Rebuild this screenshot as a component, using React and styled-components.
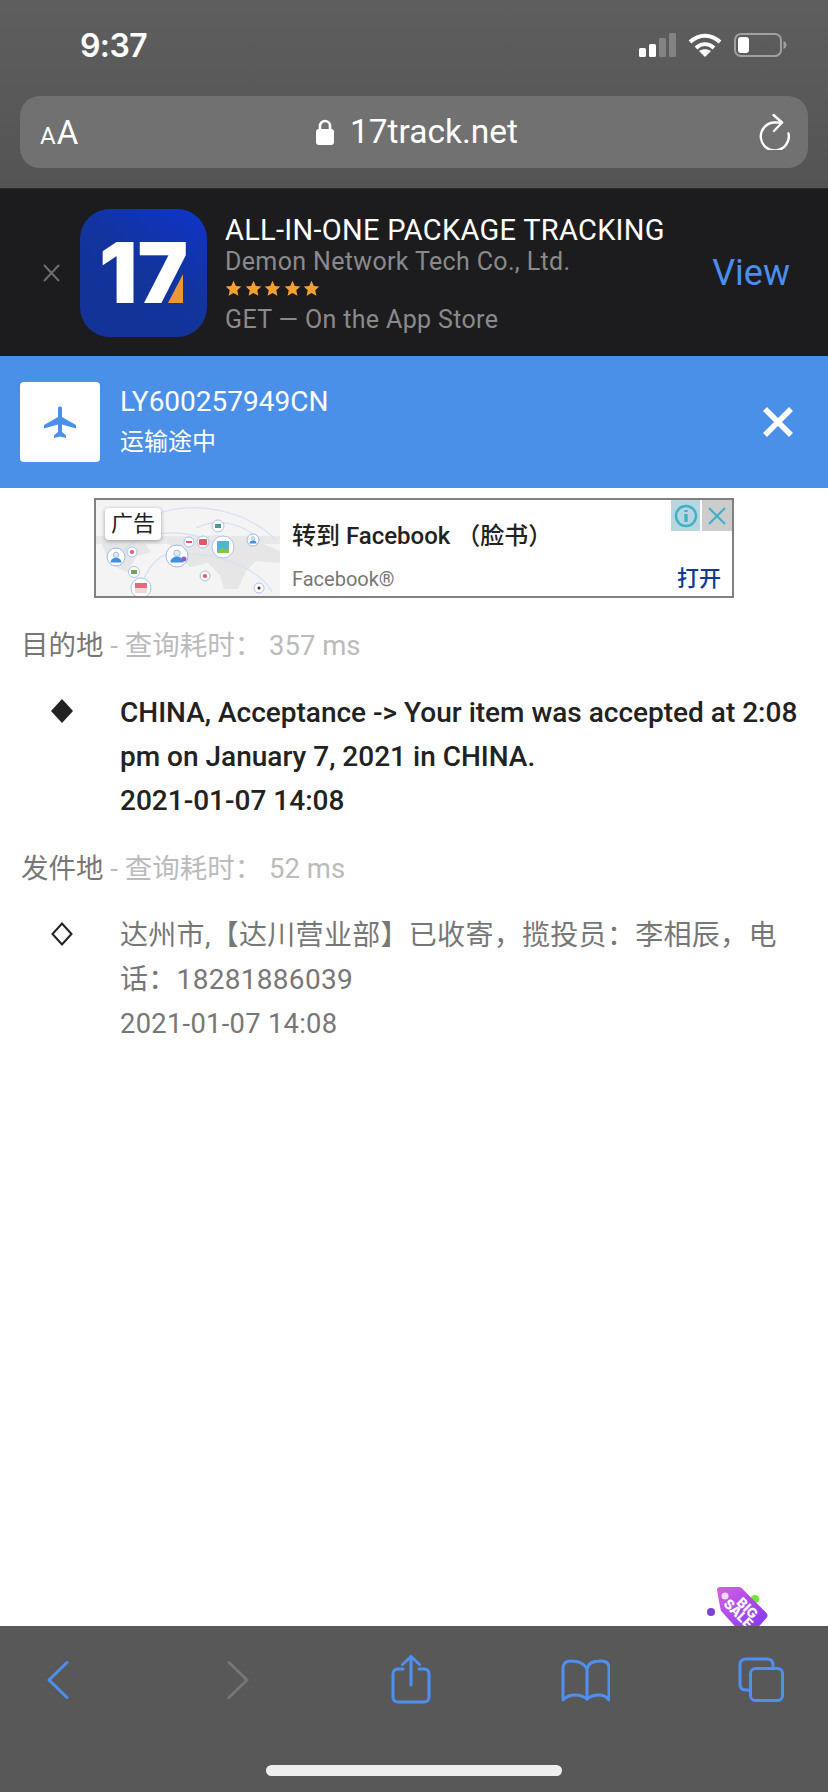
import React from "react";
import styled, { createGlobalStyle } from "styled-components";

const Global = createGlobalStyle`
  html, body { margin: 0; padding: 0; background: #fff; }
  body { font-family: Roboto, "Noto Sans CJK SC", sans-serif; }
  * { box-sizing: border-box; }
`;

const Screen = styled.div`
  width: 828px;
  height: 1792px;
  display: flex;
  flex-direction: column;
  overflow: hidden;
  background: #fff;
`;

const TopChrome = styled.header`
  height: 188px;
  padding: 0 20px;
  background: linear-gradient(#5e5e5e, #545454);
  font-family: Inter, sans-serif;
  color: #fff;
`;

const StatusBar = styled.div`
  height: 96px;
  padding: 28px 21px 0 60px;
  display: flex;
  justify-content: space-between;
  align-items: flex-start;
`;

const Clock = styled.span`
  font-size: 32px;
  line-height: 36px;
  font-weight: 600;
  letter-spacing: -0.6px;
`;

const StatusIcons = styled.div`
  display: flex;
  align-items: center;
  gap: 12px;
  padding-top: 5px;
`;

const AddressPill = styled.div`
  height: 72px;
  border-radius: 20px;
  background: #717171;
  padding: 0 18px 0 20px;
  display: flex;
  align-items: center;
  justify-content: space-between;
`;

const ReaderMark = styled.span`
  display: flex;
  align-items: baseline;
  width: 40px;
  padding-top: 4px;
  font-size: 33px;
  line-height: 36px;
  letter-spacing: -1px;
  font-family: Roboto, sans-serif;
  & > small { font-size: 24px; margin-right: 2px; }
`;

const Domain = styled.div`
  display: flex;
  align-items: center;
  gap: 16px;
  margin-right: 4px;
  font-family: Roboto, sans-serif;
  font-size: 33.5px;
  line-height: 40px;
`;

const AppBanner = styled.section`
  height: 168px;
  background: #1c1c1e;
  border-top: 1px solid #2a2a2a;
  padding-left: 43px;
  padding-right: 38px;
  display: flex;
  align-items: center;
  font-family: Roboto, sans-serif;
`;

const AppIcon = styled.svg`
  width: 127px;
  height: 128px;
  margin-left: 20px;
  flex: none;
`;

const AppInfo = styled.div`
  margin-left: 18px;
  align-self: flex-start;
  padding-top: 26px;
  display: flex;
  flex-direction: column;
`;

const AppTitle = styled.div`
  color: #fff;
  font-size: 29px;
  line-height: 30px;
  letter-spacing: 0.28px;
`;

const AppSub = styled.div`
  color: #8a8a8e;
  font-size: 25px;
  line-height: ${(p) => p.$lh}px;
  margin-top: ${(p) => p.$top || 0}px;
  letter-spacing: 0.35px;
`;

const Stars = styled.div`
  display: flex;
  gap: 2.5px;
  margin-top: 1px;
  height: 17px;
`;

const ViewLink = styled.a`
  margin-left: auto;
  color: #4a8ef0;
  font-size: 36px;
  line-height: 40px;
`;

const TrackBar = styled.section`
  height: 132px;
  flex: none;
  background: #4a90e9;
  padding: 0 34px 0 20px;
  display: flex;
  align-items: center;
  color: #fff;
`;

const PlaneTile = styled.div`
  width: 80px;
  height: 80px;
  border-radius: 4px;
  background: #fff;
  display: flex;
  align-items: center;
  justify-content: center;
`;

const TrackText = styled.div`
  margin-left: 20px;
  display: flex;
  flex-direction: column;
`;

const TrackNumber = styled.div`
  font-size: 28px;
  line-height: 41px;
`;

const TrackState = styled.div`
  font-size: 24px;
  line-height: 41px;
`;

const DismissButton = styled.svg`
  margin-left: auto;
  width: 32px;
  height: 32px;
`;

const Main = styled.main`
  flex: 1;
  position: relative;
  overflow: hidden;
  padding-top: 10px;
`;

const AdCard = styled.aside`
  position: relative;
  width: 640px;
  height: 100px;
  margin-left: 94px;
  border: 2px solid #808080;
  display: flex;
  background: #fff;
`;

const AdMap = styled.svg`
  width: 184px;
  height: 96px;
  flex: none;
`;

const AdLabel = styled.span`
  position: absolute;
  left: 9px;
  top: 8px;
  width: 56px;
  height: 32px;
  border-radius: 4px;
  background: #fff;
  box-shadow: 0 1px 4px rgba(0, 0, 0, 0.35);
  font-size: 22px;
  line-height: 32px;
  text-align: center;
  color: #222;
`;

const AdBody = styled.div`
  flex: 1;
  padding: 19px 11px 0 12px;
  display: flex;
  flex-direction: column;
`;

const AdTitle = styled.div`
  font-size: 24px;
  line-height: 34px;
  font-weight: 500;
  color: #222;
  white-space: pre;
`;

const AdFoot = styled.div`
  margin-top: 13px;
  display: flex;
  justify-content: space-between;
  align-items: center;
`;

const AdBrand = styled.span`
  font-size: 20px;
  line-height: 26px;
  color: #777;
`;

const AdOpen = styled.span`
  font-size: 22px;
  line-height: 26px;
  font-weight: 500;
  color: #0d3a96;
`;

const AdControls = styled.div`
  position: absolute;
  right: 0;
  top: 0;
  display: flex;
  gap: 2px;
`;

const AdControl = styled.span`
  width: ${(p) => p.$w}px;
  height: 31px;
  background: ${(p) => p.$bg};
  display: flex;
  align-items: center;
  justify-content: center;
`;

const Results = styled.div`
  padding: 26px 28px 0 21px;
`;

const SourceHeading = styled.div`
  font-size: 27.5px;
  line-height: 44px;
  color: #bbb;
  white-space: pre;
  & > b { color: #777; font-weight: 400; }
`;

const EventRow = styled.div`
  display: flex;
  margin: 23px 0 24px;
`;

const Marker = styled.svg`
  width: 22px;
  height: 24px;
  margin: 8px 47px 0 30px;
  flex: none;
`;

const EventText = styled.div`
  font-size: 28px;
  line-height: 44px;
  letter-spacing: ${(p) => (p.$active ? 0 : 0.3)}px;
  font-weight: ${(p) => (p.$active ? 500 : 400)};
  color: ${(p) => (p.$active ? "#222" : "#777")};
`;

const EventTime = styled.div`
  font-size: ${(p) => (p.$active ? 28 : 27.3)}px;
`;

const SaleTag = styled.svg`
  position: absolute;
  right: 56px;
  bottom: 0;
  width: 70px;
  height: 42px;
`;

const BottomBar = styled.footer`
  height: 166px;
  flex: none;
  background: #585858;
  padding-top: 29px;
  display: flex;
  flex-direction: column;
`;

const ToolRow = styled.nav`
  display: flex;
  gap: 126px;
  padding-left: 32px;
`;

const ToolIcon = styled.svg`
  width: 50px;
  height: 50px;
  fill: none;
  stroke: ${(p) => (p.$muted ? "#767676" : "#4f8ff2")};
  stroke-width: 3;
  stroke-linecap: round;
  stroke-linejoin: round;
`;

const HomeBar = styled.div`
  width: 296px;
  height: 11px;
  margin: 60px 0 0 266px;
  border-radius: 6px;
  background: #eee;
`;

const Star = () => (
  <svg width="17" height="17" viewBox="0 0 24 24" fill="#f5a033">
    <path d="M12 1l3.300 7.300 7.700.9-5.700 5.300 1.600 7.900L12 18.400 5.100 22.400l1.600-7.900L1 9.200l7.700-.9z" />
  </svg>
);

// One network node: a ringed circle holding a small user bust
const UserNode = ({ x, y, r }) => (
  <g>
    <circle cx={x} cy={y} r={r} fill="#fff" stroke="#9db8ec" strokeWidth="1" />
    <circle cx={x} cy={y - r * 0.25} r={r * 0.3} fill="#dfe8f5" stroke="#7f9fd0" strokeWidth="0.6" />
    <path d={`M${x - r * 0.6} ${y + r * 0.6}c0-${r * 0.7} ${r * 1.2}-${r * 0.7} ${r * 1.2} 0z`} fill="#3f8fe0" />
  </g>
);

const WorldMap = () => (
  <AdMap viewBox="0 0 184 96">
    <rect width="184" height="96" fill="#f4f4f5" />
    <rect y="36" width="184" height="8" fill="#e8e8e8" />
    <path d="M5 42l20-6 22 4 8 12-14 4-10 16-14-6-8-14zM70 40l50-5 40 6 24 10v12l-24-2-10 10-8 18h-14l-4-14-12-12-18 4-10-10z" fill="#e6e6e6" />
    <g fill="none" stroke="#d4e0f4" strokeWidth="1.200">
      <path d="M60 14C100 0 150 10 180 40" />
      <path d="M20 60C40 28 90 26 122 45" />
      <path d="M44 92C50 62 70 50 82 54" />
      <path d="M82 55C120 50 165 70 176 92" />
      <path d="M100 28C120 18 145 22 165 40" />
    </g>
    <UserNode x={20} y={57} r={9} />
    <UserNode x={81} y={56} r={11} />
    <UserNode x={157} y={40} r={6} />
    <circle cx="88" cy="59" r="2.500" fill="#8a5fc8" />
    <g fill="#fff" stroke="#aac3ee" strokeWidth="1">
      <circle cx="36" cy="52" r="5" />
      <circle cx="38" cy="72" r="5.500" />
      <circle cx="45" cy="88" r="10" />
      <circle cx="93" cy="42" r="5" />
      <circle cx="107" cy="42" r="6" />
      <circle cx="127" cy="47" r="11" />
      <circle cx="122" cy="26" r="6" />
      <circle cx="109" cy="76" r="5" />
      <circle cx="163" cy="88" r="5" />
    </g>
    <circle cx="36" cy="52" r="2" fill="#e0566b" />
    <rect x="35" y="70" width="6" height="4" fill="#6aa84f" />
    <rect x="39" y="83" width="12" height="5" fill="#e8677a" />
    <rect x="39" y="88" width="12" height="5" fill="#f3d7db" />
    <rect x="90" y="41" width="6" height="2" fill="#e0566b" />
    <rect x="103" y="39" width="8" height="6" rx="1" fill="#e0566b" />
    <rect x="121" y="41" width="12" height="12" rx="1" fill="#4db6d6" />
    <path d="M121 53l5-6 3 3 4-3v6z" fill="#8bc34a" />
    <rect x="119" y="24" width="6" height="4" fill="#4e9a8a" />
    <circle cx="109" cy="76" r="2" fill="#e0566b" />
    <circle cx="163" cy="88" r="1.500" fill="#333" />
  </AdMap>
);

const App = () => (
  <Screen>
    <Global />
    <TopChrome>
      <StatusBar>
        <Clock>9:37</Clock>
        <StatusIcons>
          <svg width="37" height="24" viewBox="0 0 37 24">
            <rect x="0" y="15" width="7" height="9" rx="1.500" fill="#fff" />
            <rect x="10" y="11" width="7" height="13" rx="1.500" fill="#fff" />
            <rect x="20" y="5" width="7" height="19" rx="1.500" fill="#838383" />
            <rect x="30" y="0" width="7" height="24" rx="1.500" fill="#838383" />
          </svg>
          <svg width="34" height="24" viewBox="0 0 34 24" fill="none" stroke="#fff" strokeWidth="4">
            <path d="M2 9c9-8.500 21-8.500 30 0" />
            <path d="M8 15c5.500-5 12.500-5 18 0" />
            <path d="M17 24l-6-6c3.500-2.500 8.500-2.500 12 0z" fill="#fff" stroke="none" />
          </svg>
          <svg width="53" height="24" viewBox="0 0 53 24">
            <rect x="1" y="1" width="46" height="22" rx="6" fill="none" stroke="#a0a0a0" strokeWidth="2" />
            <rect x="4" y="4" width="11" height="16" rx="3" fill="#fff" />
            <path d="M49.500 8c2 .8 3 2.200 3 4s-1 3.200-3 4z" fill="#a0a0a0" />
          </svg>
        </StatusIcons>
      </StatusBar>
      <AddressPill>
        <ReaderMark>
          <small>A</small>A
        </ReaderMark>
        <Domain>
          <svg width="18" height="26" viewBox="0 0 18 26">
            <path d="M4 11V7a5 5 0 0 1 10 0v4" fill="none" stroke="#fff" strokeWidth="2.600" />
            <rect x="0" y="10" width="18" height="16" rx="3" fill="#fff" />
          </svg>
          <span>17track.net</span>
        </Domain>
        <svg width="32" height="36" viewBox="0 0 32 36" fill="none" stroke="#fff" strokeWidth="2.400" strokeLinecap="round" strokeLinejoin="round">
          <path d="M30.500 19.500A14 14 0 1 1 15.500 8.500H24" />
          <path d="M15.500 1L24 8.500 16 17" />
        </svg>
      </AddressPill>
    </TopChrome>

    <AppBanner>
      <svg width="17" height="18" viewBox="0 0 17 18" stroke="#6e6e72" strokeWidth="2" style={{ flex: "none" }}>
        <path d="M1 1l15 16M16 1L1 17" />
      </svg>
      <AppIcon viewBox="0 0 127 128">
        <defs>
          <linearGradient id="iconFill" x1="1" y1="0" x2="0.4" y2="0.9">
            <stop offset="0" stopColor="#0f34cc" />
            <stop offset="0.6" stopColor="#12349c" />
            <stop offset="1" stopColor="#133398" />
          </linearGradient>
        </defs>
        <rect width="127" height="128" rx="30" fill="url(#iconFill)" />
        <path d="M88 94l15-29v29z" fill="#f0953a" />
        <text x="19" y="94" fontFamily="Inter, sans-serif" fontWeight="900" fontSize="84" fill="#fff" textLength="89" lengthAdjust="spacingAndGlyphs">17</text>
      </AppIcon>
      <AppInfo>
        <AppTitle>ALL-IN-ONE PACKAGE TRACKING</AppTitle>
        <AppSub $lh={34}>Demon Network Tech Co., Ltd.</AppSub>
        <Stars>
          <Star />
          <Star />
          <Star />
          <Star />
          <Star />
        </Stars>
        <AppSub $lh={32} $top={7}>GET — On the App Store</AppSub>
      </AppInfo>
      <ViewLink>View</ViewLink>
    </AppBanner>

    <TrackBar>
      <PlaneTile>
        <svg width="32" height="34" viewBox="0 0 32 34" fill="#4a90e9">
          <path d="M14 3c0-2 4-2 4 0v9l14 8v3.500l-14-4V27l4 3.500V33l-6-1.500L10 33v-2.500l4-3.500v-7.500L0 23.500V20l14-8z" />
        </svg>
      </PlaneTile>
      <TrackText>
        <TrackNumber>LY600257949CN</TrackNumber>
        <TrackState>运输途中</TrackState>
      </TrackText>
      <DismissButton viewBox="0 0 32 32" stroke="#fff" strokeWidth="5.500">
        <path d="M3 3l26 26M29 3L3 29" />
      </DismissButton>
    </TrackBar>

    <Main>
      <AdCard>
        <WorldMap />
        <AdLabel>广告</AdLabel>
        <AdBody>
          <AdTitle>转到 Facebook （脸书）</AdTitle>
          <AdFoot>
            <AdBrand>Facebook®</AdBrand>
            <AdOpen>打开</AdOpen>
          </AdFoot>
        </AdBody>
        <AdControls>
          <AdControl $w={29} $bg="#b8d6de">
            <svg width="24" height="24" viewBox="0 0 24 24" fill="none" stroke="#3fb1c9" strokeWidth="2.400">
              <circle cx="12" cy="12" r="10" />
              <path d="M12 10v8M12 6v2" strokeWidth="3.400" />
            </svg>
          </AdControl>
          <AdControl $w={30} $bg="#cccccc">
            <svg width="22" height="22" viewBox="0 0 22 22" stroke="#3fb1c9" strokeWidth="2.200">
              <path d="M3 3l16 16M19 3L3 19" />
            </svg>
          </AdControl>
        </AdControls>
      </AdCard>

      <Results>
        <SourceHeading><b>目的地</b> - 查询耗时： 357 ms</SourceHeading>
        <EventRow>
          <Marker viewBox="0 0 22 24">
            <path d="M11 0l11 12-11 12L0 12z" fill="#222" />
          </Marker>
          <EventText $active>
            CHINA, Acceptance -&gt; Your item was accepted at 2:08 pm on January 7, 2021 in CHINA.
            <EventTime $active>2021-01-07 14:08</EventTime>
          </EventText>
        </EventRow>
        <SourceHeading><b>发件地</b> - 查询耗时： 52 ms</SourceHeading>
        <EventRow>
          <Marker viewBox="0 0 22 24">
            <path d="M11 1.500l9.500 10.500L11 22.500 1.500 12z" fill="none" stroke="#222" strokeWidth="2" />
          </Marker>
          <EventText>
            达州市,【达川营业部】已收寄，揽投员：李相辰，电话：18281886039
            <EventTime>2021-01-07 14:08</EventTime>
          </EventText>
        </EventRow>
      </Results>

      <SaleTag viewBox="0 0 70 42">
        <defs>
          <linearGradient id="tagFill" x1="0" y1="0" x2="1" y2="1">
            <stop offset="0" stopColor="#d75fe2" />
            <stop offset="1" stopColor="#7a35f2" />
          </linearGradient>
        </defs>
        <circle cx="9" cy="28" r="4" fill="#7c3fd8" />
        <circle cx="53" cy="15" r="4" fill="#6fe832" />
        <path d="M18 3h18c2 0 3 .5 4 1.500l24 24c2 2 2 4 0 6L50 50H40L20 28c-1-1-1.500-2-1.500-3L15 6c0-2 1-3 3-3z" fill="url(#tagFill)" />
        <circle cx="23" cy="12" r="3.500" fill="#f3dcf8" />
        <g fill="#fff" fontFamily="Inter, sans-serif" fontWeight="800" fontSize="13.5" textAnchor="middle">
          <text transform="translate(42 27.500) rotate(45)">BIG</text>
          <text transform="translate(33 33) rotate(45)">SALE</text>
        </g>
      </SaleTag>
    </Main>

    <BottomBar>
      <ToolRow>
        <ToolIcon viewBox="0 0 50 50">
          <path d="M35 7.500L17 25l18 17.500" />
        </ToolIcon>
        <ToolIcon viewBox="0 0 50 50" $muted>
          <path d="M21 7.500L39 25 21 42.500" />
        </ToolIcon>
        <ToolIcon viewBox="0 0 50 50">
          <path d="M19 14h-5c-3 0-5 2-5 5v23c0 3 2 5 5 5h26c3 0 5-2 5-5V19c0-3-2-5-5-5h-5" />
          <path d="M27 30V1.500M18.500 9.500L27 1.500l8.500 8" />
        </ToolIcon>
        <ToolIcon viewBox="0 0 50 50">
          <path d="M27 14v30" />
          <path d="M27 14C24 8 18 6 11 6 5 6 3 9 3 13v32c4-4 8-5 12-5 5 0 9 1.500 12 4 3-2.500 7-4 12-4 4 0 7 1 10 5V13c0-4-2-7-8-7-7 0-13 2-14 8z" />
        </ToolIcon>
        <ToolIcon viewBox="0 0 50 50">
          <rect x="14.500" y="13.500" width="32" height="32" rx="5" />
          <path d="M14.500 35H10c-4 0-6-2-6-6V10c0-4 2-6 6-6h21c4 0 6 2 6 6v3.500" />
        </ToolIcon>
      </ToolRow>
      <HomeBar />
    </BottomBar>
  </Screen>
);

export default App;
